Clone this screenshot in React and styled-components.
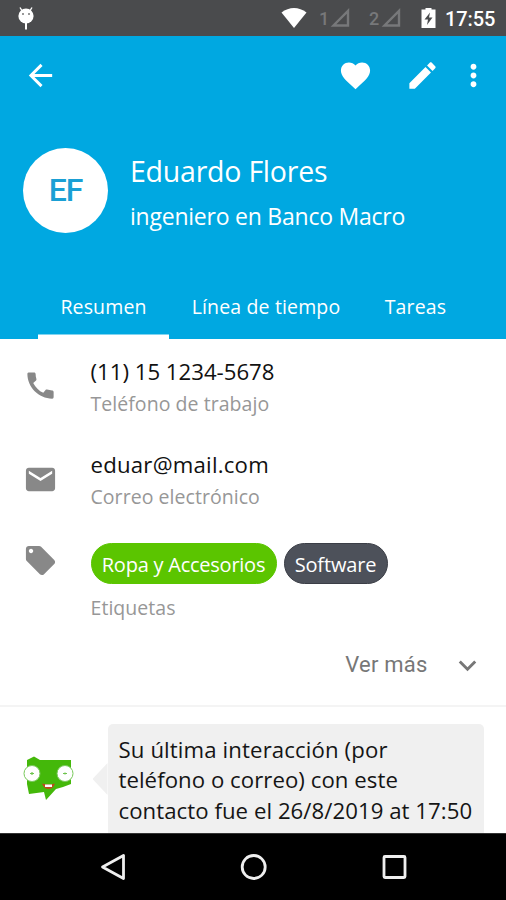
import React from "react";
import styled, { createGlobalStyle, css } from "styled-components";

const Global = createGlobalStyle`
  * { box-sizing: border-box; }
  body { margin: 0; background: #fff; }
`;

const Screen = styled.div`
  width: 506px;
  height: 900px;
  display: flex;
  flex-direction: column;
  overflow: hidden;
  background: #fff;
  font-family: "Open Sans", "Noto Sans", sans-serif;
`;

const StatusBar = styled.div`
  flex: none;
  height: 36px;
  display: flex;
  align-items: center;
  padding: 0 11px 0 18px;
  background: #4a4b4d;
`;
const StatusGroup = styled.div`
  margin-left: auto;
  display: flex;
  align-items: center;
`;
const Sim = styled.span`
  width: ${(p) => p.$width}px;
  margin-left: ${(p) => p.$gap}px;
  font: 500 18px/36px Roboto, sans-serif;
  padding-top: 2px;
  color: #77787a;
`;
const Battery = styled.svg`
  width: 15px;
  height: 20px;
  margin-left: 20px;
`;
const Clock = styled.span`
  width: 50px;
  margin-left: 9px;
  font: 500 20px/36px Roboto, sans-serif;
  padding-top: 2px;
  letter-spacing: -0.1px;
  white-space: nowrap;
  color: #fff;
`;

const Header = styled.header`
  flex: none;
  height: 303px;
  display: flex;
  flex-direction: column;
  background: #00a8e1;
  color: #fff;
`;
const Toolbar = styled.div`
  height: 78px;
  display: flex;
  align-items: center;
  padding: 0 15.5px 0 22.5px;
`;
const Actions = styled.div`
  margin-left: auto;
  display: flex;
  gap: 32px;
`;
const Glyph = styled.svg`
  display: block;
  flex: none;
  width: 35px;
  height: 35px;
  margin-left: ${(p) => p.$pull || 0}px;
  fill: currentColor;
`;
const Profile = styled.div`
  display: flex;
  padding: 34px 0 0 23px;
  height: 160px;
`;
const Avatar = styled.div`
  width: 85px;
  height: 85px;
  border-radius: 50%;
  background: #fff;
  color: #1a9fd4;
  font: 500 32px/84px Roboto, sans-serif;
  letter-spacing: -1.2px;
  text-align: center;
`;
const Identity = styled.div`
  margin-left: 22px;
  white-space: nowrap;
`;
const Name = styled.div`
  margin-top: 2px;
  font-size: 28.5px;
  line-height: 42px;
  letter-spacing: -0.23px;
`;
const Job = styled.div`
  margin-top: 6px;
  font-size: 23px;
  line-height: 36px;
  letter-spacing: -0.23px;
`;
const Tabs = styled.nav`
  display: flex;
  height: 65px;
  padding-left: 38px;
`;
const Tab = styled.div`
  width: ${(p) => p.$width}px;
  text-align: center;
  white-space: nowrap;
  font-size: 19.5px;
  line-height: 65px;
  letter-spacing: 0.15px;
  ${(p) => p.$active && css`box-shadow: inset 0 -4.5px #fff;`}
`;

const Content = styled.main`
  flex: 1;
  min-height: 0;
  overflow: hidden;
`;
const Row = styled.section`
  display: flex;
  height: ${(p) => p.$height}px;
  padding-left: 22.5px;
  color: #888;
`;
const RowIcon = styled.div`
  flex: none;
  width: 68px;
  padding-top: ${(p) => p.$top}px;
`;
const Value = styled.div`
  margin-top: 17px;
  font-size: 22.2px;
  line-height: 32px;
  letter-spacing: ${(p) => p.$track || 0}px;
  white-space: nowrap;
  color: #111;
`;
const Caption = styled.div`
  font-size: 19.5px;
  line-height: 32px;
  letter-spacing: 0.05px;
  white-space: nowrap;
  color: #979797;
`;
const Chips = styled.div`
  display: flex;
  gap: 7px;
  margin-bottom: 8px;
`;
const Chip = styled.span`
  width: ${(p) => p.$width}px;
  height: 41px;
  border-radius: 21px;
  border: 1px solid ${(p) => p.$edge};
  background: ${(p) => p.$fill};
  color: #fff;
  font-size: 20px;
  line-height: 41px;
  letter-spacing: ${(p) => p.$track}px;
  text-align: center;
  white-space: nowrap;
`;
const More = styled.div`
  display: flex;
  align-items: center;
  justify-content: flex-end;
  height: 82px;
  padding-right: 21.5px;
  border-bottom: 2px solid #f4f4f4;
  color: #777;
  font: 400 22px/30px Roboto, sans-serif;
`;
const MoreLabel = styled.span`
  letter-spacing: 0.2px;
  margin-right: 22px;
`;
const Message = styled.section`
  display: flex;
  padding: 17px 22px 0 22px;
`;
const Bot = styled.svg`
  flex: none;
  width: 54px;
  height: 50px;
  margin-top: 32px;
`;
const Tail = styled.span`
  flex: none;
  width: 15px;
  height: 32px;
  margin: 39px 0 0 16.5px;
  background: #f0f0f0;
  clip-path: polygon(100% 0, 0 50%, 100% 100%);
`;
const Bubble = styled.div`
  flex: 1;
  height: 130px;
  padding: 11px;
  border-radius: 5px;
  background: #f0f0f0;
  color: #151515;
  font-size: 22.2px;
  line-height: 30.3px;
  white-space: nowrap;
`;
const Line = styled.div`
  letter-spacing: ${(p) => p.$track || 0}px;
`;

const NavBar = styled.footer`
  flex: none;
  height: 67px;
  display: flex;
  align-items: center;
  justify-content: center;
  gap: 104.5px;
  background: #000;
  border-top: 1px solid #333;
`;
const NavIcon = styled.svg`
  width: 36px;
  height: 36px;
  fill: none;
  stroke: #efefef;
  stroke-width: 2.8;
  stroke-linejoin: round;
`;

const PATHS = {
  back: "M20 11H7.83l5.59-5.59L12 4l-8 8 8 8 1.41-1.41L7.83 13H20v-2z",
  heart:
    "M12 21.35l-1.45-1.32C5.4 15.36 2 12.28 2 8.5 2 5.42 4.42 3 7.5 3c1.74 0 3.41.81 4.5 2.09C13.09 3.81 14.76 3 16.5 3 19.58 3 22 5.42 22 8.5c0 3.78-3.4 6.86-8.55 11.54L12 21.35z",
  edit: "M3 17.25V21h3.75L17.81 9.94l-3.75-3.75L3 17.25zM20.71 7.04c.39-.39.39-1.02 0-1.41l-2.34-2.34c-.39-.39-1.02-.39-1.41 0l-1.83 1.83 3.75 3.75 1.83-1.83z",
  dots: "M12 8c1.1 0 2-.9 2-2s-.9-2-2-2-2 .9-2 2 .9 2 2 2zm0 2c-1.1 0-2 .9-2 2s.9 2 2 2 2-.9 2-2-.9-2-2-2zm0 6c-1.1 0-2 .9-2 2s.9 2 2 2 2-.9 2-2-.9-2-2-2z",
  phone:
    "M20.01 15.38c-1.23 0-2.42-.2-3.53-.56-.35-.12-.74-.03-1.01.24l-1.57 1.97c-2.83-1.35-5.48-3.9-6.89-6.83l1.95-1.66c.27-.28.35-.67.24-1.02-.37-1.11-.56-2.3-.56-3.53 0-.54-.45-.99-.99-.99H4.19C3.65 3 3 3.24 3 3.99 3 13.28 10.73 21 20.01 21c.71 0 .99-.63.99-1.18v-3.45c0-.54-.45-.99-.99-.99z",
  mail: "M20 4H4c-1.1 0-1.99.9-1.99 2L2 18c0 1.1.9 2 2 2h16c1.1 0 2-.9 2-2V6c0-1.1-.9-2-2-2zm0 4l-8 5-8-5V6l8 5 8-5v2z",
  tag: "M21.41 11.58l-9-9C12.05 2.22 11.55 2 11 2H4c-1.1 0-2 .9-2 2v7c0 .55.22 1.05.59 1.42l9 9c.36.36.86.58 1.41.58.55 0 1.05-.22 1.41-.59l7-7c.37-.36.59-.86.59-1.41 0-.55-.23-1.06-.59-1.42zM5.5 7C4.67 7 4 6.33 4 5.5S4.67 4 5.5 4 7 4.67 7 5.5 6.33 7 5.5 7z",
  down: "M7.41 8.59L12 13.17l4.59-4.58L18 10l-6 6-6-6 1.41-1.41z",
};

const Icon = ({ name, pull }) => (
  <Glyph viewBox="0 0 24 24" $pull={pull}>
    <path d={PATHS[name]} />
  </Glyph>
);

const Signal = () => (
  <svg width="20" height="20" viewBox="0 0 20 20">
    <path d="M18 3V17.500H3.500Z" fill="none" stroke="#77787a" strokeWidth="2.4" />
  </svg>
);

export default function App() {
  return (
    <Screen>
      <Global />
      <StatusBar>
        <svg width="16" height="24" viewBox="0 0 16 24">
          <path d="M2 1.500l2.500 4M14 1.500l-2.500 4" stroke="#fff" strokeWidth="1.4" />
          <circle cx="8" cy="10" r="7.600" fill="#fff" />
          <path d="M8 17v6.500" stroke="#fff" strokeWidth="2" />
          <circle cx="5" cy="8" r="1" fill="#777" />
          <circle cx="11" cy="8" r="1" fill="#777" />
        </svg>
        <StatusGroup>
          <svg width="26" height="22" viewBox="0 0 26 22">
            <path d="M0.500 5.500C8 -0.500 18 -0.500 25.500 5.500L13 21Z" fill="#fff" />
          </svg>
          <Sim $gap={12} $width={11}>1</Sim>
          <Signal />
          <Sim $gap={19} $width={12}>2</Sim>
          <Signal />
          <Battery viewBox="0 0 15 20">
            <path d="M4.500 0h6v1.500h4V20H0.500V1.500h4z" fill="#fff" />
            <path d="M9 4.500L3.500 11.500h3.500l-1 5.500 5.500-7.500H8z" fill="#4a4b4d" />
          </Battery>
          <Clock>17:55</Clock>
        </StatusGroup>
      </StatusBar>
      <Header>
        <Toolbar>
          <Icon name="back" />
          <Actions>
            <Icon name="heart" />
            <Icon name="edit" />
            <Icon name="dots" pull={-16} />
          </Actions>
        </Toolbar>
        <Profile>
          <Avatar>EF</Avatar>
          <Identity>
            <Name>Eduardo Flores</Name>
            <Job>ingeniero en Banco Macro</Job>
          </Identity>
        </Profile>
        <Tabs>
          <Tab $width={131} $active>Resumen</Tab>
          <Tab $width={194}>Línea de tiempo</Tab>
          <Tab $width={105}>Tareas</Tab>
        </Tabs>
      </Header>
      <Content>
        <Row $height={93}>
          <RowIcon $top={29}><Icon name="phone" /></RowIcon>
          <div>
            <Value>(11) 15 1234-5678</Value>
            <Caption>Teléfono de trabajo</Caption>
          </div>
        </Row>
        <Row $height={111}>
          <RowIcon $top={29.5}><Icon name="mail" /></RowIcon>
          <div>
            <Value $track={0.22}>eduar@mail.com</Value>
            <Caption>Correo electrónico</Caption>
          </div>
        </Row>
        <Row $height={82}>
          <RowIcon $top={0}><Icon name="tag" /></RowIcon>
          <div>
            <Chips>
              <Chip $width={186} $track={-0.24} $fill="#5bc500" $edge="#5bc500">Ropa y Accesorios</Chip>
              <Chip $width={104} $track={-0.15} $fill="#4d515a" $edge="#3b3e46">Software</Chip>
            </Chips>
            <Caption>Etiquetas</Caption>
          </div>
        </Row>
        <More>
          <MoreLabel>Ver más</MoreLabel>
          <Icon name="down" />
        </More>
        <Message>
          <Bot viewBox="0 0 54 50">
            <path d="M5 4L12 0.500L18 4H49V28L41 31L34 33L24 44L22 36L7 38L5 28Z" fill="#44b80a" />
            <circle cx="10" cy="17.500" r="8" fill="#fff" stroke="#79c95b" strokeWidth="1" />
            <circle cx="43" cy="17.500" r="8" fill="#fff" stroke="#79c95b" strokeWidth="1" />
            <path d="M8 17.500h4M10 16v3M41 17.500h4M43 16.500v2" stroke="#6fc44e" strokeWidth="1.200" />
            <path d="M20 27.500Q27 29.500 33 27.500Q31 33 26.500 33Q22 33 20 27.500Z" fill="#bd4a20" />
            <path d="M23 28.500h7v2.500h-7z" fill="#fff" />
          </Bot>
          <Tail />
          <Bubble>
            <Line $track={0.12}>Su última interacción (por</Line>
            <Line $track={0.05}>teléfono o correo) con este</Line>
            <Line $track={0.05}>contacto fue el 26/8/2019 at 17:50</Line>
          </Bubble>
        </Message>
      </Content>
      <NavBar>
        <NavIcon viewBox="0 0 36 36"><path d="M7.500 18L28.500 6.500V29.500Z" /></NavIcon>
        <NavIcon viewBox="0 0 36 36"><circle cx="18.700" cy="18" r="11.500" /></NavIcon>
        <NavIcon viewBox="0 0 36 36"><rect x="8" y="7.500" width="21" height="21" rx="1" /></NavIcon>
      </NavBar>
    </Screen>
  );
}
